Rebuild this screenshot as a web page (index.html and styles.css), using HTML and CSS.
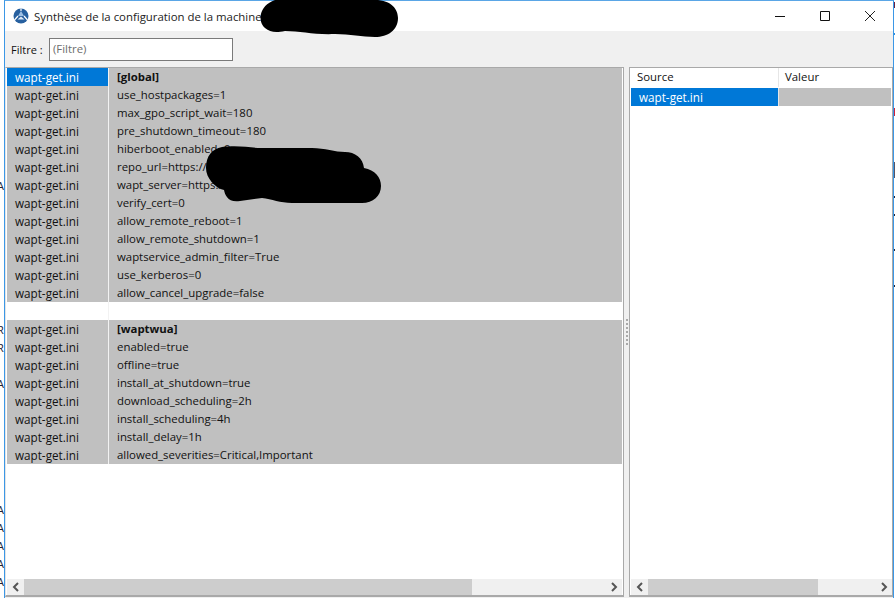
FILE: index.html
```html
<!DOCTYPE html>
<html lang="fr">
<head>
<meta charset="utf-8">
<title>Synthèse de la configuration de la machine</title>
<link rel="stylesheet" href="styles.css">
</head>
<body>
<div class="desk">
  <span class="peek p1">A</span><span class="peek p2">R</span><span class="peek p3">R</span><span class="peek p4">A</span>
  <span class="peek p5">A</span><span class="peek p6">A</span><span class="peek p7">A</span><span class="peek p8">A</span><span class="peek p9">A</span>
  <i class="mark m1"></i><i class="mark m2"></i><i class="mark m3"></i><i class="mark m4"></i><i class="mark m5"></i><i class="mark m6"></i><i class="mark m7"></i><i class="mark m8"></i>
</div>
<div class="window">
  <header class="titlebar">
    <svg class="appicon" viewBox="0 0 16 16" width="16" height="16">
      <circle cx="8" cy="8" r="7.5" fill="#27609f"/>
      <path d="M8 3 L11 8 H5 Z" fill="#9fc0e4"/>
      <path d="M8 .5 V3 M5 8 L1.5 12 M11 8 L14.5 12" stroke="#fff" stroke-width="1.2" fill="none"/>
      <path d="M4.5 11.5 H11.5 L8 8.6 Z" fill="#dfe9f5"/>
    </svg>
    <span class="title">Synthèse de la configuration de la machine</span>
    <div class="controls">
      <svg viewBox="0 0 10 10" width="10" height="10"><path d="M0 5.5 H10" stroke="#111" fill="none"/></svg>
      <svg viewBox="0 0 10 10" width="10" height="10"><path d="M.5 .5 H9.5 V9.5 H.5 Z" stroke="#111" fill="none"/></svg>
      <svg viewBox="0 0 10 10" width="10" height="10"><path d="M0 0 L10 10 M10 0 L0 10" stroke="#222" fill="none"/></svg>
    </div>
  </header>
  <div class="filterbar">
    <label class="filterlabel">Filtre :</label>
    <div class="filterinput">(Filtre)</div>
  </div>
  <div class="panes">
    <section class="pane pane-left">
      <div class="rows">
        <div class="row"><div class="c1 sel">wapt-get.ini</div><div class="c2 b">[global]</div></div>
        <div class="row"><div class="c1">wapt-get.ini</div><div class="c2">use_hostpackages=1</div></div>
        <div class="row"><div class="c1">wapt-get.ini</div><div class="c2">max_gpo_script_wait=180</div></div>
        <div class="row"><div class="c1">wapt-get.ini</div><div class="c2">pre_shutdown_timeout=180</div></div>
        <div class="row"><div class="c1">wapt-get.ini</div><div class="c2">hiberboot_enabled=0</div></div>
        <div class="row"><div class="c1">wapt-get.ini</div><div class="c2">repo_url=https://</div></div>
        <div class="row"><div class="c1">wapt-get.ini</div><div class="c2">wapt_server=https://</div></div>
        <div class="row"><div class="c1">wapt-get.ini</div><div class="c2">verify_cert=0</div></div>
        <div class="row"><div class="c1">wapt-get.ini</div><div class="c2">allow_remote_reboot=1</div></div>
        <div class="row"><div class="c1">wapt-get.ini</div><div class="c2">allow_remote_shutdown=1</div></div>
        <div class="row"><div class="c1">wapt-get.ini</div><div class="c2">waptservice_admin_filter=True</div></div>
        <div class="row"><div class="c1">wapt-get.ini</div><div class="c2">use_kerberos=0</div></div>
        <div class="row"><div class="c1">wapt-get.ini</div><div class="c2">allow_cancel_upgrade=false</div></div>
        <div class="row blank"><div class="c1"></div><div class="c2"></div></div>
        <div class="row"><div class="c1">wapt-get.ini</div><div class="c2 b">[waptwua]</div></div>
        <div class="row"><div class="c1">wapt-get.ini</div><div class="c2">enabled=true</div></div>
        <div class="row"><div class="c1">wapt-get.ini</div><div class="c2">offline=true</div></div>
        <div class="row"><div class="c1">wapt-get.ini</div><div class="c2">install_at_shutdown=true</div></div>
        <div class="row"><div class="c1">wapt-get.ini</div><div class="c2">download_scheduling=2h</div></div>
        <div class="row"><div class="c1">wapt-get.ini</div><div class="c2">install_scheduling=4h</div></div>
        <div class="row"><div class="c1">wapt-get.ini</div><div class="c2">install_delay=1h</div></div>
        <div class="row"><div class="c1">wapt-get.ini</div><div class="c2">allowed_severities=Critical,Important</div></div>
      </div>
      <div class="hscroll">
        <span class="arrow"><svg viewBox="0 0 8 10" width="8" height="10"><path d="M6 1 L2 5 L6 9" stroke="#555" stroke-width="2" fill="none"/></svg></span>
        <div class="track"><div class="thumb thumb-left"></div></div>
        <span class="arrow"><svg viewBox="0 0 8 10" width="8" height="10"><path d="M2 1 L6 5 L2 9" stroke="#555" stroke-width="2" fill="none"/></svg></span>
      </div>
    </section>
    <div class="splitter"><span class="grip"></span></div>
    <section class="pane pane-right">
      <div class="rows">
        <div class="head"><div class="h1">Source</div><div class="h2">Valeur</div></div>
        <div class="srow"><div class="h1 sel">wapt-get.ini</div><div class="h2 grey"></div></div>
      </div>
      <div class="hscroll">
        <span class="arrow"><svg viewBox="0 0 8 10" width="8" height="10"><path d="M6 1 L2 5 L6 9" stroke="#555" stroke-width="2" fill="none"/></svg></span>
        <div class="track"><div class="thumb thumb-right"></div></div>
        <span class="arrow"><svg viewBox="0 0 8 10" width="8" height="10"><path d="M2 1 L6 5 L2 9" stroke="#555" stroke-width="2" fill="none"/></svg></span>
      </div>
    </section>
  </div>
  <svg class="redact" viewBox="0 0 895 598" width="895" height="598">
    <path d="M275 0 H375 C392 0 398 10 398 18 C398 30 388 37 375 37 C362 37 350 34 335 34 C315 35 300 31 285 31 C275 33 270 32 265 28 C258 22 258 6 275 0 Z" fill="#000"/>
    <path d="M222 147 C240 145 250 148 262 148 L312 148 C325 148 335 152 345 152 C355 152 363 158 364 168 C375 170 381 177 381 186 C381 196 373 203 362 203 L292 203 C280 203 272 199 262 198 L240 201 C228 203 225 195 224 190 C215 188 206 178 206 168 C206 156 212 149 222 147 Z" fill="#000"/>
  </svg>
</div>
</body>
</html>
```

FILE: styles.css
```css
html, body {
  margin: 0;
  padding: 0;
  width: 895px;
  height: 598px;
  overflow: hidden;
  background: #fff;
  font-family: "Open Sans", "Noto Sans", sans-serif;
  font-size: 11.4px;
  color: #111;
}
.desk { position: absolute; inset: 0; overflow: hidden; }
.peek { position: absolute; left: -3px; font-size: 11px; line-height: 14px; color: #223; }
.p1 { top: 179px; } .p2 { top: 323px; } .p3 { top: 341px; } .p4 { top: 377px; }
.p5 { top: 503px; } .p6 { top: 521px; } .p7 { top: 539px; } .p8 { top: 557px; } .p9 { top: 575px; }
.mark { position: absolute; left: 894px; width: 1px; height: 2px; background: #223; }
.m1 { top: 2px; background: #6a2040; height: 6px; }
.m2 { top: 33px; background: #2a8fe0; }
.m3 { top: 108px; background: #d0203a; height: 8px; }
.m4 { top: 162px; background: #556; height: 16px; }
.m5 { top: 196px; }
.m6 { top: 214px; }
.m7 { top: 249px; }
.m8 { top: 285px; }
.window {
  position: absolute;
  left: 4px;
  top: 0;
  width: 890px;
  height: 598px;
  box-sizing: border-box;
  border-left: 1px solid #3b97e6;
  border-right: 1px solid #3b97e6;
  border-top: 1px solid #5aa6e6;
  background: #f0f0f0;
  display: flex;
  flex-direction: column;
}
.titlebar {
  height: 30px;
  background: #fff;
  display: flex;
  align-items: center;
  padding-left: 8px;
  flex: none;
}
.appicon { margin-right: 5px; }
.title { font-size: 11.4px; color: #222; white-space: nowrap; }
.controls {
  margin-left: auto;
  display: flex;
  gap: 35px;
  padding-right: 18px;
  align-items: center;
}
.filterbar {
  height: 36px;
  flex: none;
  display: flex;
  align-items: center;
  padding-left: 6px;
  box-sizing: border-box;
}
.filterlabel { width: 38px; font-size: 11px; }
.filterinput {
  width: 184px;
  height: 23px;
  box-sizing: border-box;
  border: 1px solid #7a7a7a;
  background: #fff;
  color: #6d6d6d;
  font-size: 11.4px;
  line-height: 20px;
  padding-left: 3px;
}
.panes { flex: 1; display: flex; min-height: 0; padding: 0 0 1px 0; }
.pane {
  box-sizing: border-box;
  border: 1px solid #a9a9a9;
  border-bottom: 2px solid #a9a9a9;
  background: #fff;
  display: flex;
  flex-direction: column;
  padding: 0 1px;
  flex: none;
}
.pane-left { width: 619px; border-left-color: #e4e4e4; }
.pane-right { width: 264px; padding-right: 0; border-right-color: #a9a9a9; }
.splitter {
  width: 5px;
  flex: none;
  position: relative;
  background: #f0f0f0;
}
.grip {
  position: absolute;
  left: 2px;
  top: 252px;
  width: 2px;
  height: 28px;
  background: repeating-linear-gradient(#a9a9a9 0 2px, transparent 2px 4px);
}
.rows { flex: 1; min-height: 0; }
.row { display: flex; height: 18px; line-height: 18px; }
.c1 {
  width: 102px;
  flex: none;
  padding-left: 8px;
  box-sizing: border-box;
  background: #c0c0c0;
  border-right: 1px solid #f2f2f2;
  font-size: 11.7px;
}
.c2 {
  flex: 1;
  padding-left: 8px;
  background: #c0c0c0;
  white-space: nowrap;
}
.b { font-weight: 700; }
.blank .c1, .blank .c2 { background: #fff; }
.sel.c1 { background: #0078d7; color: #fff; }
.head { display: flex; height: 19px; line-height: 18px; }
.srow { display: flex; height: 18px; line-height: 18px; margin-top: 1px; margin-right: 1px; }
.h1 { width: 148px; padding-left: 6px; box-sizing: border-box; border-right: 1px solid #e6e6e6; flex: none; }
.h2 { flex: 1; padding-left: 6px; }
.srow .sel { background: #0078d7; color: #fff; padding-left: 8px; font-size: 11.7px; }
.grey { background: #c0c0c0; }
.hscroll {
  height: 16px;
  flex: none;
  display: flex;
  background: #f0f0f0;
}
.arrow {
  width: 17px;
  flex: none;
  display: flex;
  align-items: center;
  justify-content: center;
}
.track { flex: 1; display: flex; min-width: 0; }
.thumb { background: #cdcdcd; height: 100%; }
.thumb-left { width: 448px; }
.thumb-right { width: 170px; }
.redact { position: absolute; left: -5px; top: -1px; pointer-events: none; }
```
